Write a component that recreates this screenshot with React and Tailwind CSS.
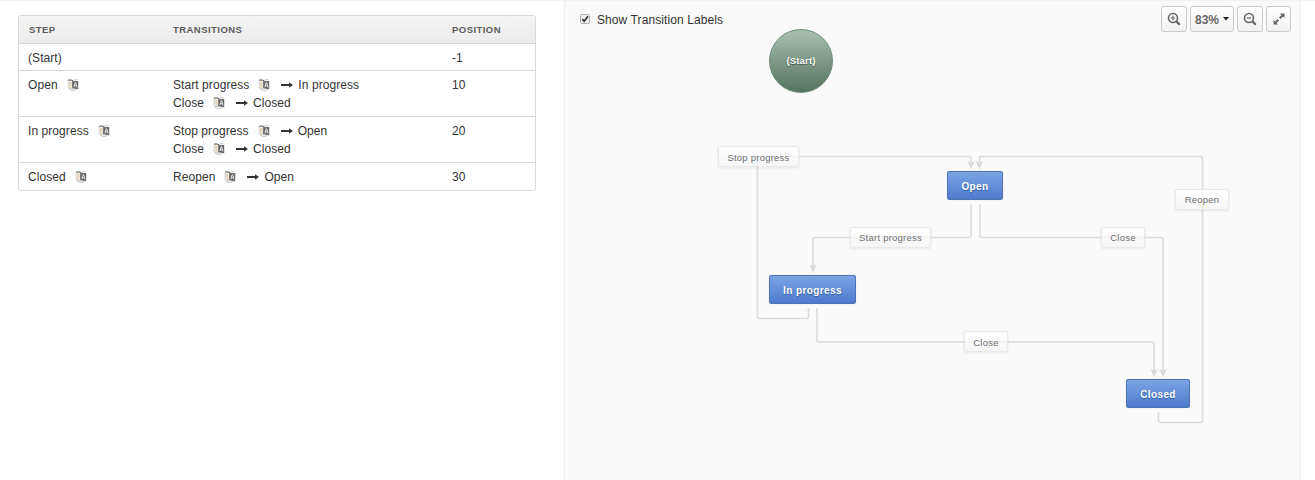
import React from "react";

function TranslateIcon() {
  return (
    <svg className="mr-[10px] ml-[9px] inline-block h-3 w-3 shrink-0" viewBox="0 0 12 12">
      <path d="M1 1.500h4.500v8.500L1 9z" fill="#f3f1ec" stroke="#c4c4c4" strokeWidth=".7" />
      <path d="M1 1h3.500l2 1.200" fill="none" stroke="#666" strokeWidth="1.200" />
      <path d="M2.200 4h2.200M2.200 6h2.200M2.600 8h1.800" stroke="#cf9a5c" strokeWidth=".7" />
      <path d="M2 10l3.500 1.500 4-.9" fill="none" stroke="#bdbdbd" strokeWidth="1" />
      <path d="M5.200 2.200l6-.2v8.200l-6-1z" fill="#666" />
      <path d="M6.900 8.200l1.200-4.500h.6L10 8.400M7.400 6.700h2.100" fill="none" stroke="#eeeeee" strokeWidth=".9" />
      <path d="M7 .8h3.500" stroke="#b5b5b5" strokeWidth=".8" />
    </svg>
  );
}

function Arrow() {
  return (
    <svg className="mr-[5px] ml-[1px] h-[9px] w-3 shrink-0" viewBox="0 0 12 9">
      <path d="M0 3.100h8.500v1.900H0z M8 1.300l4 2.750-4 2.750z" fill="#333" />
    </svg>
  );
}

const rows = [
  { step: "(Start)", transitions: [], position: "-1", plain: true, h: "h-[27px] pt-[5px]" },
  { step: "Open", transitions: [["Start progress", "In progress"], ["Close", "Closed"]], position: "10", h: "h-[46px] pt-[5px]" },
  { step: "In progress", transitions: [["Stop progress", "Open"], ["Close", "Closed"]], position: "20", h: "h-[46px] pt-[5px]" },
  { step: "Closed", transitions: [["Reopen", "Open"]], position: "30", h: "h-[28px] pt-[5px]" },
];

function StepsTable() {
  return (
    <div className="mt-[14px] ml-[18px] w-[518px] overflow-hidden rounded-[3px] border border-[#d9d9d9] text-[12px] leading-[18px] tracking-[0.07px] text-[#333]">
      <div className="grid h-[27px] grid-cols-[145px_279px_1fr] items-center bg-linear-to-b from-[#f4f4f4] to-[#ececec] pl-[9px] text-[9.500px] font-bold tracking-[0.45px] text-[#5c5c5c]">
        <div className="pl-px">STEP</div>
        <div>TRANSITIONS</div>
        <div>POSITION</div>
      </div>
      {rows.map((r) => (
        <div key={r.step} className={"grid grid-cols-[145px_279px_1fr] border-t border-[#d9d9d9] pl-[9px] " + r.h}>
          <div className="flex h-[18px] items-center">
            {r.step}
            {!r.plain && <TranslateIcon />}
          </div>
          <div>
            {r.transitions.map(([name, to]) => (
              <div key={name} className="flex h-[18px] items-center">
                {name}
                <TranslateIcon />
                <Arrow />
                {to}
              </div>
            ))}
          </div>
          <div>{r.position}</div>
        </div>
      ))}
    </div>
  );
}

const buttonClass =
  "flex h-[26px] items-center justify-center rounded-[3px] border border-[#c9c9c9] bg-linear-to-b from-white to-[#f2f2f2] text-[#555]";

function Magnifier({ plus }) {
  return (
    <svg className="h-[14px] w-[14px]" viewBox="0 0 14 14" fill="none" stroke="#666">
      <circle cx="6" cy="6" r="4.5" strokeWidth="1.6" />
      <path d="M9.4 9.4l3.3 3.3" strokeWidth="2.3" />
      <path d={plus ? "M3.8 6h4.4M6 3.8v4.4" : "M3.8 6h4.4"} strokeWidth="1.2" />
    </svg>
  );
}

function Toolbar() {
  return (
    <div className="mt-[5px] mr-[9px] flex">
      <button className={buttonClass + " w-[26px]"}><Magnifier plus /></button>
      <button className={buttonClass + " ml-[3px] w-[44px] gap-[4px] text-[12px] font-bold text-[#666]"}>
        <span className="mt-[2px]">83%</span>
        <svg className="h-[4px] w-[6px]" viewBox="0 0 6 4"><path d="M0 0h6L3 3.5z" fill="#222" /></svg>
      </button>
      <button className={buttonClass + " ml-[3px] w-[26px]"}><Magnifier /></button>
      <button className={buttonClass + " ml-[3px] w-[25px]"}>
        <svg className="h-3 w-3" viewBox="0 0 12 12" fill="#666">
          <path d="M7 .5h4.500V5L10 3.500 7.500 6 6 4.500 8.500 2z" />
          <path d="M5 11.500H.5V7L2 8.500l2.500-2.500L6 7.500 3.500 10z" />
        </svg>
      </button>
    </div>
  );
}

const edges = [
  "M808.5 308V316.500Q808.500 318.500 806.500 318.500H759.500Q757.500 318.500 757.500 316.500V158.500Q757.500 156.500 759.500 156.500H969Q971 156.500 971 158.500V162",
  "M971 204V235.500Q971 237.500 969 237.500H815Q813 237.500 813 239.500V267",
  "M980 204V235.500Q980 237.500 982 237.500H1161Q1163 237.500 1163 239.500V371",
  "M817 308V340Q817 342 819 342H1152Q1154 342 1154 344V371",
  "M1158.5 412V420.500Q1158.500 422.500 1160.500 422.500H1200.500Q1202.500 422.500 1202.500 420.500V158.500Q1202.500 156.500 1200.500 156.500H981.500Q979.500 156.500 979.500 158.500V162",
];
const tips = [[971, 169.5], [979.5, 169.5], [813, 273], [1154, 377.5], [1163, 377.5]];

const labels = [
  { text: "Stop progress", pos: "left-[153px] top-[146px] w-[81px] pt-[3px]" },
  { text: "Start progress", pos: "left-[285px] top-[227px] w-[81px] pt-px" },
  { text: "Close", pos: "left-[536px] top-[227px] w-[44px] pt-px" },
  { text: "Close", pos: "left-[399px] top-[331px] w-[44px] pt-[3px]" },
  { text: "Reopen", pos: "left-[610px] top-[189px] w-[54px] pt-px" },
];

const nodes = [
  { text: "Open", pos: "left-[382px] top-[170px] w-[56px]" },
  { text: "In progress", pos: "left-[204px] top-[274px] w-[87px]" },
  { text: "Closed", pos: "left-[561px] top-[378px] w-[64px]" },
];

function Diagram() {
  return (
    <div className="absolute inset-0">
      <svg className="absolute inset-0 h-[479px] w-[735px]" viewBox="565 1 735 479">
        <g fill="none" stroke="#dcdcdc" strokeWidth="1.6">
          {edges.map((d) => <path key={d} d={d} />)}
        </g>
        {tips.map(([x, y]) => (
          <path key={x} d={`M${x} ${y}l-3.600 -8.500l3.600 1.500l3.600 -1.500z`} fill="#dadada" />
        ))}
      </svg>
      <div className="absolute top-[28px] left-[204px] flex h-[64px] w-[64px] items-center justify-center rounded-full border border-[#6b8b79] bg-linear-to-b from-[#a9c0b1] to-[#557460] text-[9.500px] font-bold tracking-[0.15px] text-white text-shadow-[0_1px_1px_#3d5546]">
        (Start)
      </div>
      {labels.map((l, i) => (
        <div key={i} className={"absolute -mt-px flex h-[21px] items-center justify-center rounded-[2px] border border-[#e9e9e9] bg-linear-to-b from-[#ffffffd8] to-[#f4f4f4b8] text-[9.500px] tracking-[0.23px] text-[#707070] shadow-[0_1px_3px_rgba(0,0,0,0.08)] " + l.pos}>
          {l.text}
        </div>
      ))}
      {nodes.map((n) => (
        <div key={n.text} className={"absolute flex h-[29px] items-center justify-center rounded-[2px] border border-[#4e76b4] bg-linear-to-b from-[#7da3e4] to-[#4d7ccb] pt-[2px] text-[10px] font-bold tracking-[0.4px] text-white shadow-[0_0_1px_rgba(0,0,0,0.25)] text-shadow-[0_1px_1px_#315d9f] " + n.pos}>
          {n.text}
        </div>
      ))}
    </div>
  );
}

export default function App() {
  return (
    <div className="flex h-[480px] w-[1315px] overflow-hidden border-t border-[#f3f3f3] bg-white font-['Liberation_Sans',Arial,sans-serif]">
      <div className="w-[564px] shrink-0"><StepsTable /></div>
      <div className="relative w-[737px] shrink-0 border-x border-[#eeeeee] bg-[#fafafa]">
        <Diagram />
        <div className="relative flex justify-between">
          <label className="mt-[10px] ml-[15px] flex h-[18px] items-center text-[12px] tracking-[0.09px] text-[#333]">
            <svg className="mr-[7px] h-[10px] w-[10px] -translate-y-px" viewBox="0 0 10 10">
              <rect x=".5" y=".5" width="9" height="9" rx="1" fill="#ededed" stroke="#b0b0b0" />
              <path d="M2.200 5.200l2 2L8 2.300" fill="none" stroke="#333" strokeWidth="1.800" />
            </svg>
            Show Transition Labels
          </label>
          <Toolbar />
        </div>
      </div>
    </div>
  );
}
